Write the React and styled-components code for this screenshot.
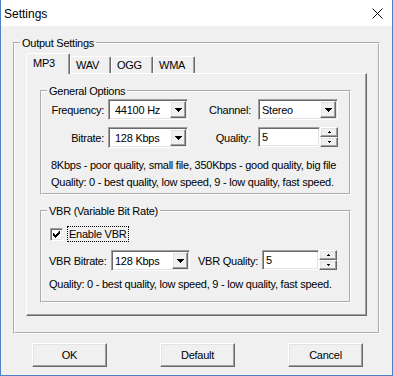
import React from "react";
import styled, { createGlobalStyle, css } from "styled-components";

const GlobalStyle = createGlobalStyle`
  html, body {
    margin: 0;
    padding: 0;
    background: #fff;
  }
  body {
    font-family: "Liberation Sans", Arial, sans-serif;
    font-size: 11px;
    letter-spacing: -0.25px;
    color: #000;
  }
  * {
    box-sizing: border-box;
  }
`;

const raised = css`
  background: #f0f0f0;
  border: 1px solid;
  border-color: #fff #696969 #696969 #fff;
  box-shadow: inset -1px -1px 0 #a0a0a0, inset 1px 1px 0 #e3e3e3;
`;

const sunken = css`
  background: #fff;
  border: 1px solid;
  border-color: #a0a0a0 #fff #fff #a0a0a0;
  box-shadow: inset 1px 1px 0 #696969, inset -1px -1px 0 #e3e3e3;
`;

const Window = styled.div`
  width: 393px;
  height: 376px;
  display: flex;
  flex-direction: column;
  background: #f0f0f0;
  border: 1px solid #4d80c8;
  border-top: 0;
`;

const TitleBar = styled.div`
  flex: none;
  height: 26px;
  display: flex;
  align-items: center;
  justify-content: space-between;
  padding: 1px 9px 0 3px;
  background: #fff;
  font-size: 12px;
  letter-spacing: 0;
`;

const Client = styled.div`
  flex: 1;
  display: flex;
  flex-direction: column;
  padding: 10px 12px 0;
`;

const Group = styled.fieldset`
  margin: ${({ $top }) => $top || 0}px 0 0;
  padding: 0;
  min-width: 0;
  border: 2px groove #fff;
`;

const Legend = styled.legend`
  margin-left: 5px;
  padding: 0 2px;
  font-size: 11px;
  line-height: 14px;
`;

const TabArea = styled.div`
  display: flex;
  flex-direction: column;
  padding: 3px 11px 16px 11px;
`;

const TabStrip = styled.div`
  display: flex;
  align-items: flex-end;
  margin-bottom: -1px;
  position: relative;
  z-index: 1;
`;

const Tab = styled.div`
  width: ${({ $w }) => $w}px;
  height: ${({ $active }) => ($active ? 21 : 17)}px;
  margin-bottom: ${({ $active }) => ($active ? 0 : 1)}px;
  padding: ${({ $active }) => ($active ? "3px 0 0 6px" : "2px 0 0 5px")};
  background: #f0f0f0;
  border: 1px solid;
  border-bottom: 0;
  border-color: #fff #696969 transparent #fff;
  border-radius: 2px 2px 0 0;
  box-shadow: inset -1px 0 0 #a0a0a0;
  line-height: 13px;
`;

const TabPanel = styled.div`
  display: flex;
  flex-direction: column;
  padding: 10px 15px 12px 13px;
  border: 1px solid;
  border-color: #fff #696969 #696969 #fff;
  box-shadow: inset -1px -1px 0 #a0a0a0;
`;

const GroupBody = styled.div`
  display: flex;
  flex-direction: column;
  padding: ${({ $pad }) => $pad};
`;

const FieldGrid = styled.div`
  display: grid;
  grid-template-columns: ${({ $cols }) => $cols};
  grid-auto-rows: 21px;
  row-gap: 7px;
  align-items: center;
`;

const Label = styled.span`
  text-align: ${({ $left }) => ($left ? "left" : "right")};
  padding: ${({ $left }) => ($left ? "0 0 0 7px" : "0 4px 0 0")};
  padding-right: ${({ $right }) => $right}px;
  white-space: nowrap;
`;

const Combo = styled.div`
  ${sunken};
  width: ${({ $w }) => $w}px;
  height: 21px;
  display: flex;
  align-items: center;
  padding: 1px 1px 1px ${({ $pad }) => $pad}px;
`;

const ComboText = styled.span`
  flex: 1;
  white-space: nowrap;
`;

const DropButton = styled.div`
  ${raised};
  width: 16px;
  height: 17px;
  display: flex;
  align-items: center;
  justify-content: center;
`;

const SpinField = styled.div`
  display: flex;
  align-self: start;
`;

const Edit = styled.div`
  ${sunken};
  width: ${({ $w }) => $w}px;
  height: 20px;
  display: flex;
  align-items: center;
  padding-left: 3px;
`;

const Spinner = styled.div`
  width: 18px;
  display: flex;
  flex-direction: column;
`;

const SpinButton = styled.div`
  ${raised};
  height: 10px;
  display: flex;
  align-items: center;
  justify-content: center;
`;

const Note = styled.div`
  line-height: 17px;
  white-space: nowrap;
`;

const NoteBlock = styled.div`
  margin-top: ${({ $top }) => $top}px;
  padding-left: ${({ $indent }) => $indent}px;
`;

const CheckRow = styled.div`
  display: flex;
  align-items: center;
  height: 16px;
  gap: 4px;
`;

const CheckBox = styled.div`
  ${sunken};
  width: 13px;
  height: 13px;
  display: flex;
  align-items: center;
  justify-content: center;
`;

const FocusLabel = styled.span`
  border: 1px dotted #000;
  padding: 0 2px 0 1px;
  line-height: 14px;
`;

const ButtonRow = styled.div`
  display: flex;
  justify-content: space-between;
  padding: 9px 17px 0 19px;
`;

const Button = styled.button`
  ${raised};
  width: 75px;
  height: 24px;
  padding: 0;
  font: inherit;
  font-size: 11px;
  letter-spacing: -0.25px;
  color: #000;
`;

const DownArrow = () => (
  <svg width="7" height="4" viewBox="0 0 7 4">
    <path d="M0 0h7v1h-1v1h-1v1h-1v1h-1v-1h-1v-1h-1v-1h-1z" fill="#000" />
  </svg>
);

const SmallArrow = ({ up }) => (
  <svg width="3" height="2" viewBox="0 0 3 2">
    <path d={up ? "M1 0h1v1h1v1h-3v-1h1z" : "M0 0h3v1h-1v1h-1v-1h-1z"} fill="#000" />
  </svg>
);

const Dropdown = ({ value, w = 80, pad = 3 }) => (
  <Combo $w={w} $pad={pad}>
    <ComboText>{value}</ComboText>
    <DropButton>
      <DownArrow />
    </DropButton>
  </Combo>
);

const Spin = ({ value, w }) => (
  <SpinField>
    <Edit $w={w}>{value}</Edit>
    <Spinner>
      <SpinButton>
        <SmallArrow up />
      </SpinButton>
      <SpinButton>
        <SmallArrow />
      </SpinButton>
    </Spinner>
  </SpinField>
);

const tabs = [
  { name: "MP3", w: 44, active: true },
  { name: "WAV", w: 41 },
  { name: "OGG", w: 42 },
  { name: "WMA", w: 42 },
];

export default function App() {
  return (
    <>
      <GlobalStyle />
      <Window>
        <TitleBar>
          <span>Settings</span>
          <svg width="11" height="11" viewBox="0 0 11 11">
            <path d="M0.5 0.5L10.5 10.5M10.5 0.5L0.5 10.5" stroke="#000" strokeWidth="1" />
          </svg>
        </TitleBar>
        <Client>
          <Group>
            <Legend>Output Settings</Legend>
            <TabArea>
              <TabStrip>
                {tabs.map((t) => (
                  <Tab key={t.name} $w={t.w} $active={t.active}>
                    {t.name}
                  </Tab>
                ))}
              </TabStrip>
              <TabPanel>
                <Group>
                  <Legend>General Options</Legend>
                  <GroupBody $pad="1px 0 2px 0">
                    <FieldGrid $cols="66px 80px 70px 80px">
                      <Label>Frequency:</Label>
                      <Dropdown value="44100 Hz" pad={6} />
                      <Label $right={7}>Channel:</Label>
                      <Dropdown value="Stereo" />
                      <Label>Bitrate:</Label>
                      <Dropdown value="128 Kbps" pad={6} />
                      <Label $right={7}>Quality:</Label>
                      <Spin value="5" w={62} />
                    </FieldGrid>
                    <NoteBlock $top={9} $indent={9}>
                      <Note>8Kbps - poor quality, small file, 350Kbps - good quality, big file</Note>
                      <Note>Quality: 0 - best quality, low speed, 9 - low quality, fast speed.</Note>
                    </NoteBlock>
                  </GroupBody>
                </Group>
                <Group $top={9}>
                  <Legend>VBR (Variable Bit Rate)</Legend>
                  <GroupBody $pad="8px 0 8px 8px">
                    <CheckRow>
                      <CheckBox>
                        <svg width="7" height="7" viewBox="0 0 7 7">
                          <path
                            d="M6 0h1v3h-1v1h-1v1h-1v1h-1v1h-1v-1h-1v-1h-1v-3h1v1h1v1h1v-1h1v-1h1z"
                            fill="#000"
                          />
                        </svg>
                      </CheckBox>
                      <FocusLabel>Enable VBR</FocusLabel>
                    </CheckRow>
                  </GroupBody>
                  <GroupBody $pad="0 0 8px 0">
                    <FieldGrid $cols="69px 79px 72px 75px">
                      <Label $left>VBR Bitrate:</Label>
                      <Dropdown value="128 Kbps" w={79} />
                      <Label>VBR Quality:</Label>
                      <Spin value="5" w={57} />
                    </FieldGrid>
                    <NoteBlock $top={5} $indent={7}>
                      <Note>Quality: 0 - best quality, low speed, 9 - low quality, fast speed.</Note>
                    </NoteBlock>
                  </GroupBody>
                </Group>
              </TabPanel>
            </TabArea>
          </Group>
          <ButtonRow>
            <Button>OK</Button>
            <Button>Default</Button>
            <Button>Cancel</Button>
          </ButtonRow>
        </Client>
      </Window>
    </>
  );
}
